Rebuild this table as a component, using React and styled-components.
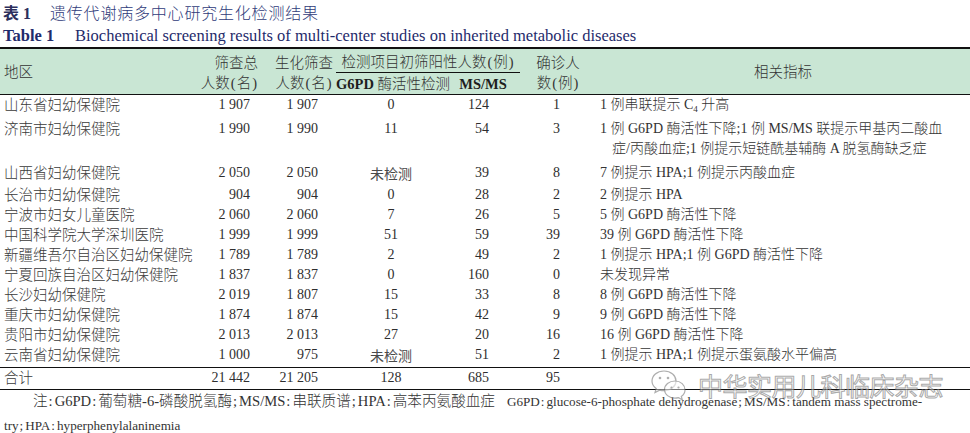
import styled, { createGlobalStyle } from 'styled-components';

const Global = createGlobalStyle`
  body {
    margin: 0;
    background: #fff;
    font-family: "Liberation Serif", "Noto Sans CJK SC", serif;
    color: #2b2b2b;
  }
`;

const Page = styled.div`
  position: relative;
  width: 970px;
  height: 433px;
  overflow: hidden;
`;

const TitleCn = styled.div`
  display: flex;
  align-items: center;
  height: 24px;
  padding-left: 3px;
  font-size: 16px;
  color: #2f3b7a;
`;

const TitleTag = styled.span`
  width: 47px;
  font-weight: 700;
  color: #2c2f5c;
`;

const TitleText = styled.span`
  letter-spacing: 0.8px;
  font-weight: 300;
`;

const TitleEn = styled.div`
  display: flex;
  align-items: center;
  height: 23px;
  padding-left: 3px;
  font-size: 16.5px;
  color: #1f2b6b;
`;

const EnTag = styled.span`
  width: 72px;
  font-weight: 700;
`;

const Table = styled.table`
  width: 970px;
  border-collapse: collapse;
  table-layout: fixed;
  font-size: 14px;
  border-top: 2px solid #111;
  border-bottom: 1px solid #111;
`;

const Head = styled.thead`
  background: #c9e6d4;
  border-bottom: 1px solid #111;
`;

const Th = styled.th`
  font-weight: 300;
  font-size: 14.5px;
  line-height: 20px;
  height: 21px;
  padding: ${p => p.$pt || 0}px ${p => p.$pr || 0}px 0 ${p => p.$pl || 0}px;
  text-align: ${p => p.$align || 'center'};
  vertical-align: middle;
  color: #333;
  white-space: nowrap;
`;

const SpanHead = styled(Th)`
  border-bottom: 1px solid #111;
  padding-top: 2px;
`;

const Paren = styled.span`
  margin: 0 1px;
`;

const Bold = styled.b`
  font-weight: 700;
  color: #1e1e1e;
`;

const Row = styled.tr`
  border-top: ${p => (p.$total ? '1px solid #111' : 'none')};
`;

const Td = styled.td`
  padding: ${p => (p.$tall ? '4px' : '0')} ${p => p.$pr || 0}px
    ${p => (p.$tall ? '4px' : '0')} ${p => p.$pl || 0}px;
  height: ${p => (p.$total ? 21 : 20)}px;
  line-height: 20px;
  text-align: ${p => p.$align || 'left'};
  vertical-align: top;
  white-space: nowrap;
  font-weight: 300;
  color: #2e2e2e;
`;

const Region = styled(Td)`
  font-size: 14.5px;
  color: #3a3a3a;
`;

const Indicator = styled(Td)`
  font-size: 14px;
  color: #333;
`;

const NotTested = styled.span`
  font-family: "Noto Sans CJK SC", sans-serif;
  font-weight: 400;
  font-size: 14px;
  color: #4a4a4a;
`;

const Sub = styled.span`
  font-size: 9px;
  line-height: 0;
  position: relative;
  top: 3px;
`;

const Cont = styled.div`
  padding-left: 12px;
`;

const Notes = styled.div`
  font-size: 13.15px;
  padding: 0 0 0 4px;
  color: #333;
  font-weight: 300;
  white-space: nowrap;
`;

const NoteLine = styled.div`
  height: 24px;
  line-height: 24px;
  padding-left: ${p => p.$indent || 0}px;
`;

const NoteCn = styled.span`
  font-size: 14.6px;
  line-height: 0;
`;

const Punct = styled.span`
  margin: 0 2px 0 1px;
`;

const Gap = styled.span`
  display: inline-block;
  width: 12px;
`;

const Watermark = styled.div`
  position: absolute;
  left: 650px;
  top: 369px;
  display: flex;
  align-items: center;
  gap: 10px;
  opacity: 0.75;
  pointer-events: none;
`;

const MarkText = styled.span`
  font-family: "Noto Sans CJK SC", sans-serif;
  font-size: 25px;
  line-height: 30px;
  letter-spacing: -0.5px;
  color: rgba(255, 255, 255, 0.6);
  -webkit-text-stroke: 1px rgba(110, 110, 110, 0.8);
`;

function WeChat() {
  return (
    <svg width="38" height="32" viewBox="0 0 38 32" fill="rgba(255,255,255,0.6)" stroke="rgba(120,120,120,0.8)" strokeWidth="1.2">
      <path d="M14 2C7 2 2 6.5 2 12c0 3 1.6 5.7 4.2 7.5L5 23.5l4.6-2.4c1.4.4 2.9.6 4.4.6 7 0 12-4.5 12-9.8S21 2 14 2z" />
      <circle cx="10" cy="9" r="1.3" fill="rgba(120,120,120,0.8)" stroke="none" />
      <circle cx="18" cy="9" r="1.3" fill="rgba(120,120,120,0.8)" stroke="none" />
      <path d="M25 12c-6 0-10.5 3.9-10.5 8.6S19 29.2 25 29.2c1.2 0 2.4-.2 3.5-.5l3.8 2-1-3.3c2.3-1.6 3.7-3.9 3.7-6.5C35 15.9 30.8 12 25 12z" />
      <circle cx="21.5" cy="18.5" r="1.1" fill="rgba(120,120,120,0.8)" stroke="none" />
      <circle cx="28.5" cy="18.5" r="1.1" fill="rgba(120,120,120,0.8)" stroke="none" />
    </svg>
  );
}

// widen ":" and ";" the way the journal typesetting does
function Spaced({ text }) {
  return text.split(/([:;])/).map((part, i) =>
    part === ':' || part === ';' ? <Punct key={i}>{part}</Punct> : part
  );
}

const NT = <NotTested>未检测</NotTested>;

const rows = [
  ['山东省妇幼保健院', '1 907', '1 907', '0', '124', '1', <>1 例串联提示 C<Sub>4</Sub> 升高</>],
  ['济南市妇幼保健院', '1 990', '1 990', '11', '54', '3',
    <>1 例 G6PD 酶活性下降;1 例 MS/MS 联提示甲基丙二酸血<Cont>症/丙酸血症;1 例提示短链酰基辅酶 A 脱氢酶缺乏症</Cont></>, true],
  ['山西省妇幼保健院', '2 050', '2 050', NT, '39', '8', '7 例提示 HPA;1 例提示丙酸血症'],
  ['长治市妇幼保健院', '904', '904', '0', '28', '2', '2 例提示 HPA'],
  ['宁波市妇女儿童医院', '2 060', '2 060', '7', '26', '5', '5 例 G6PD 酶活性下降'],
  ['中国科学院大学深圳医院', '1 999', '1 999', '51', '59', '39', '39 例 G6PD 酶活性下降'],
  ['新疆维吾尔自治区妇幼保健院', '1 789', '1 789', '2', '49', '2', '1 例提示 HPA;1 例 G6PD 酶活性下降'],
  ['宁夏回族自治区妇幼保健院', '1 837', '1 837', '0', '160', '0', '未发现异常'],
  ['长沙妇幼保健院', '2 019', '1 807', '15', '33', '8', '8 例 G6PD 酶活性下降'],
  ['重庆市妇幼保健院', '1 874', '1 874', '15', '42', '9', '9 例 G6PD 酶活性下降'],
  ['贵阳市妇幼保健院', '2 013', '2 013', '27', '20', '16', '16 例 G6PD 酶活性下降'],
  ['云南省妇幼保健院', '1 000', '975', NT, '51', '2', '1 例提示 HPA;1 例提示蛋氨酸水平偏高'],
];

function DataRow({ cells, total }) {
  const [region, a, b, g6pd, ms, confirmed, note, tall] = cells;
  return (
    <Row $total={total}>
      <Region $pl={4} $tall={tall} $total={total}>{region}</Region>
      <Td $align="right" $pr={14} $tall={tall} $total={total}>{a}</Td>
      <Td $align="right" $pr={18} $tall={tall} $total={total}>{b}</Td>
      <Td $align="center" $tall={tall} $total={total}>{g6pd}</Td>
      <Td $align="right" $pr={31} $tall={tall} $total={total}>{ms}</Td>
      <Td $align="right" $pr={36} $tall={tall} $total={total}>{confirmed}</Td>
      <Indicator $pl={4} $tall={tall} $total={total}>{note}</Indicator>
    </Row>
  );
}

export default function App() {
  return (
    <Page>
      <Global />
      <TitleCn>
        <TitleTag>表 1</TitleTag>
        <TitleText>遗传代谢病多中心研究生化检测结果</TitleText>
      </TitleCn>
      <TitleEn>
        <EnTag>Table 1</EnTag>
        <span>Biochemical screening results of multi-center studies on inherited metabolic diseases</span>
      </TitleEn>
      <Table>
        <colgroup>
          <col style={{ width: 200 }} />
          <col style={{ width: 64 }} />
          <col style={{ width: 72 }} />
          <col style={{ width: 110 }} />
          <col style={{ width: 74 }} />
          <col style={{ width: 76 }} />
          <col style={{ width: 374 }} />
        </colgroup>
        <Head>
          <tr>
            <Th rowSpan={2} $align="left" $pl={4}>地区</Th>
            <Th rowSpan={2} $pt={2} $pr={6} $align="right">筛查总<br />人数<Paren>(</Paren>名<Paren>)</Paren></Th>
            <Th rowSpan={2} $pt={2} $pl={8}>生化筛查<br />人数<Paren>(</Paren>名<Paren>)</Paren></Th>
            <SpanHead colSpan={2}>检测项目初筛阳性人数<Paren>(</Paren>例<Paren>)</Paren></SpanHead>
            <Th rowSpan={2} $pt={2}>确诊人<br />数<Paren>(</Paren>例<Paren>)</Paren></Th>
            <Th rowSpan={2}>相关指标</Th>
          </tr>
          <tr>
            <Th><Bold>G6PD</Bold> 酶活性检测</Th>
            <Th><Bold>MS/MS</Bold></Th>
          </tr>
        </Head>
        <tbody>
          {rows.map(r => (
            <DataRow key={r[0]} cells={r} />
          ))}
          <DataRow total cells={['合计', '21 442', '21 205', '128', '685', '95', '']} />
        </tbody>
      </Table>
      <Notes>
        <NoteLine $indent={29}>
          <NoteCn><Spaced text="注:G6PD:葡萄糖-6-磷酸脱氢酶;MS/MS:串联质谱;HPA:高苯丙氨酸血症" /></NoteCn>
          <Gap />
          <Spaced text="G6PD:glucose-6-phosphate dehydrogenase;MS/MS:tandem mass spectrome-" />
        </NoteLine>
        <NoteLine><Spaced text="try;HPA:hyperphenylalaninemia" /></NoteLine>
      </Notes>
      <Watermark>
        <WeChat />
        <MarkText>中华实用儿科临床杂志</MarkText>
      </Watermark>
    </Page>
  );
}
